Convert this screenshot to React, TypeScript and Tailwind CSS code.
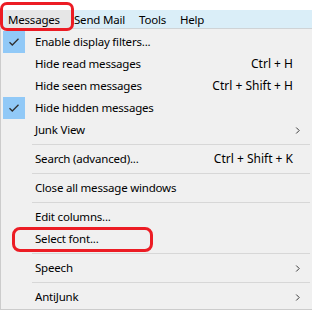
type Row =
  | { kind: "item"; label: string; shortcut?: string; checked?: boolean; submenu?: boolean; circled?: boolean }
  | { kind: "sep" };

const ROWS: Row[] = [
  { kind: "item", label: "Enable display filters...", checked: true },
  { kind: "item", label: "Hide read messages", shortcut: "Ctrl + H" },
  { kind: "item", label: "Hide seen messages", shortcut: "Ctrl + Shift + H" },
  { kind: "item", label: "Hide hidden messages", checked: true },
  { kind: "item", label: "Junk View", submenu: true },
  { kind: "sep" },
  { kind: "item", label: "Search (advanced)...", shortcut: "Ctrl + Shift + K" },
  { kind: "sep" },
  { kind: "item", label: "Close all message windows" },
  { kind: "sep" },
  { kind: "item", label: "Edit columns..." },
  { kind: "item", label: "Select font...", circled: true },
  { kind: "sep" },
  { kind: "item", label: "Speech", submenu: true },
  { kind: "sep" },
  { kind: "item", label: "AntiJunk", submenu: true },
];

function CheckMark() {
  return (
    <svg width="12" height="10" viewBox="0 0 12 10" fill="none">
      <path d="M1.5 5.2 L4.3 8 L10.5 1.8" stroke="#2f2f2f" strokeWidth="1.3" />
    </svg>
  );
}

function Chevron() {
  return (
    <svg width="6" height="9" viewBox="0 0 6 9" fill="none" className="mr-[11px]">
      <path d="M1.2 1.5 L4.2 4.5 L1.2 7.5" stroke="#3a3a3a" strokeWidth="1" />
    </svg>
  );
}

export default function App() {
  return (
    <div
      className="relative h-[312px] w-[312px] overflow-hidden bg-white text-[11.5px] tracking-[-0.2px] text-black"
      style={{ fontFamily: '"Noto Sans", "Open Sans", sans-serif' }}
    >
      <div className="h-[10px]" />
      <div className="flex h-[19px] items-center border-b border-[#cfd3d6] bg-[#daeef8] pl-[6px] leading-[19px]">
        <div className="h-full w-[66px] bg-[#e6e6e6] pl-[2px]">Messages</div>
        <div className="h-full w-[65px] pl-[2px]">Send Mail</div>
        <div className="h-full w-[41px] pl-[2px]">Tools</div>
        <div className="h-full pl-[2px]">Help</div>
      </div>

      <div className="border-b border-l border-[#cccccc] bg-[#f0f0f0] pb-px pt-[2px]">
        {ROWS.map((row, i) =>
          row.kind === "sep" ? (
            <div key={i} className="flex h-[7px] items-center pl-[31px] pr-[2px]">
              <div className="h-px w-full bg-[#d7d7d7]" />
            </div>
          ) : (
            <div key={i} className="relative flex h-[22px] items-center">
              <div className="ml-[2px] flex h-[22px] w-[22px] items-center justify-center">
                {row.checked ? (
                  <div className="flex h-[22px] w-[22px] items-center justify-center bg-[#91c9f7]">
                    <CheckMark />
                  </div>
                ) : null}
              </div>
              <span className="ml-[10px] flex-1">{row.label}</span>
              {row.shortcut ? (
                <span className="mr-[19px] text-[12px] tracking-normal">{row.shortcut}</span>
              ) : null}
              {row.submenu ? <Chevron /> : null}
              {row.circled ? (
                <div className="pointer-events-none absolute left-[11px] top-[-1px] h-[25px] w-[141px] rounded-[8px] border-[3px] border-[#ec1c24]" />
              ) : null}
            </div>
          )
        )}
      </div>

      <div className="pointer-events-none absolute left-0 top-[2px] h-[29px] w-[74px] rounded-[7px] border-[3px] border-[#ec1c24]" />
    </div>
  );
}
